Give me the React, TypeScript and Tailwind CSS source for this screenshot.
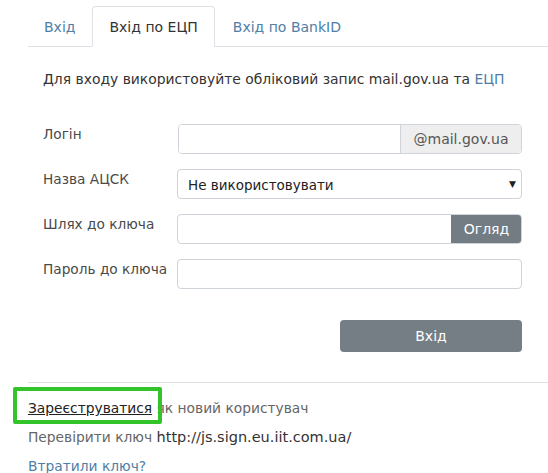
import React from "react";

export default function App() {
  const font = { fontFamily: '"DejaVu Sans", Verdana, sans-serif' };
  return (
    <div className="w-[548px] h-[473px] overflow-hidden bg-white text-[14px] leading-[20px] text-[#333]" style={font}>
      <div className="pl-[28px] pt-[6px]">
        <div className="flex border-b border-[#dee2e6] h-[41px]">
          <div className="pl-[16px] pr-[17px] flex items-center text-[#4f7ea6] h-[40px] mt-[1px]">Вхід</div>
          <div className="px-[16px] flex items-center bg-white border border-[#dee2e6] border-b-white rounded-t-[4px] h-[41px] -mb-[1px]">Вхід по ЕЦП</div>
          <div className="px-[18px] flex items-center text-[#4f7ea6] h-[40px] mt-[1px]">Вхід по BankID</div>
        </div>
      </div>
      <div className="pl-[43px] pr-[26px]">
        <div className="mt-[22px] h-[20px] text-[13.9px]">
          Для входу використовуйте обліковий запис mail.gov.ua та <span className="text-[#4f7ea6]">ЕЦП</span>
        </div>
        <div className="mt-[35px] flex flex-col gap-[15px]">
          <div className="flex items-start">
            <div className="w-[135px] text-[#4a4a4a] text-[13.7px]">Логін</div>
            <div className="flex-1 flex h-[30px] border border-[#ced4da] rounded-[4px] overflow-hidden">
              <div className="flex-1 bg-white"></div>
              <div className="w-[121px] bg-[#eeeeee] border-l border-[#ced4da] flex items-center justify-center text-[#555]">@mail.gov.ua</div>
            </div>
          </div>
          <div className="flex items-start">
            <div className="w-[134px] text-[#4a4a4a] text-[13.7px]">Назва АЦСК</div>
            <div className="flex-1 flex items-center justify-between h-[30px] border border-[#ced4da] rounded-[4px] pl-[10px] pr-[5px] text-[#222]">
              <span className="mt-[2px] text-[13.5px]">Не використовувати</span>
              <span className="text-[9px] text-[#222]">▼</span>
            </div>
          </div>
          <div className="flex items-start">
            <div className="w-[134px] text-[#4a4a4a] text-[13.7px]">Шлях до ключа</div>
            <div className="flex-1 flex h-[30px] border border-[#ced4da] rounded-[4px] overflow-hidden">
              <div className="flex-1"></div>
              <div className="w-[71px] bg-[#737b83] text-white flex items-center justify-center -my-[1px] -mr-[1px]">Огляд</div>
            </div>
          </div>
          <div className="flex items-start">
            <div className="w-[134px] text-[#4a4a4a] text-[13.7px]">Пароль до ключа</div>
            <div className="flex-1 h-[30px] border border-[#ced4da] rounded-[4px]"></div>
          </div>
        </div>
        <div className="flex justify-end mt-[31px]">
          <div className="w-[182px] h-[32px] rounded-[4px] bg-[#757d85] text-white flex items-center justify-center">Вхід</div>
        </div>
      </div>
      <div className="ml-[28px] mt-[30px] border-t border-[#dee2e6]"></div>
      <div className="pl-[28px] text-[13.8px]">
        <div className="mt-[15px] h-[20px] text-[#666] relative">
          <span className="text-[#222] underline">Зареєструватися</span> як новий користувач
          <div className="absolute left-[-15px] top-[-11px] w-[149px] h-[37px] border-[4px] border-[#33c42b] rounded-[2px]"></div>
        </div>
        <div className="mt-[9px] h-[20px] text-[#666]">
          Перевірити ключ <span className="text-[#333] text-[14.5px]">http://js.sign.eu.iit.com.ua/</span>
        </div>
        <div className="mt-[9px] text-[#4f7ea6]">Втратили ключ?</div>
      </div>
    </div>
  );
}
